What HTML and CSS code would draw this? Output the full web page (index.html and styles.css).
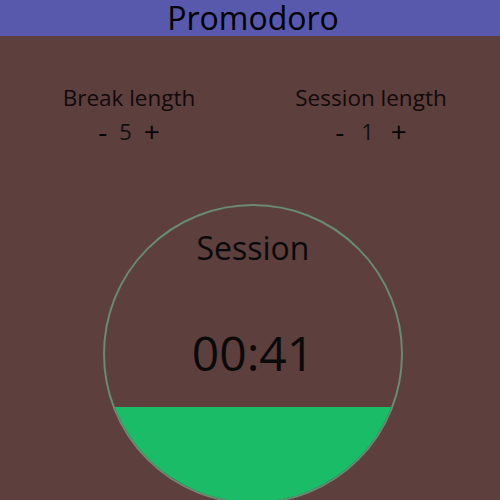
FILE: index.html
```html
<!DOCTYPE html>
<html>
<head>
<meta charset="utf-8">
<link rel="stylesheet" href="styles.css">
</head>
<body>
<header class="bar"><h1 class="title">Promodoro</h1></header>
<main class="main">
  <section class="settings">
    <div class="setting">
      <div class="label">Break length</div>
      <div class="controls"><span class="btn">-</span><span class="val">5</span><span class="btn">+</span></div>
    </div>
    <div class="setting">
      <div class="label">Session length</div>
      <div class="controls controls-wide"><span class="btn">-</span><span class="val">1</span><span class="btn">+</span></div>
    </div>
  </section>
  <div class="clock">
    <div class="fill"></div>
    <div class="mode">Session</div>
    <div class="time">00:41</div>
  </div>
</main>
</body>
</html>
```
FILE: styles.css
```css
html, body { margin: 0; padding: 0; }
body {
  background: #5d3f3d;
  font-family: "Open Sans", sans-serif;
  color: #0a0a0a;
  height: 500px;
  overflow: hidden;
}
.bar {
  background: #5858ad;
  height: 36px;
  display: flex;
  justify-content: center;
  align-items: center;
  padding-left: 6px;
}
.title {
  margin: 0;
  font-weight: 400;
  font-size: 32px;
  line-height: 36px;
  color: #000;
}
.main { padding: 0 8px; }
.settings {
  display: grid;
  grid-template-columns: 1fr 1fr;
  padding-top: 47px;
}
.setting { text-align: center; }
.label { font-size: 22.5px; line-height: 30px; color: #120a0a; }
.controls {
  display: flex;
  justify-content: center;
  align-items: center;
  gap: 12px;
  margin-top: 2px;
  font-size: 22px;
  line-height: 32px;
}
.controls-wide { gap: 17px; }
.btn { font-size: 28px; color: #050505; }
.val { color: #111; }
.clock {
  position: relative;
  width: 296px;
  height: 296px;
  border: 2px solid #6a8a72;
  border-radius: 50%;
  margin: 57px auto 0;
  left: 3px;
  overflow: hidden;
  text-align: center;
}
.fill {
  position: absolute;
  left: 0; right: 0; bottom: 0;
  height: 95px;
  background: #1abc68;
}
.mode {
  position: relative;
  font-size: 32px;
  line-height: 40px;
  margin-top: 22px;
}
.time {
  position: relative;
  font-size: 48px;
  line-height: 64px;
  margin-top: 53px;
}
```
